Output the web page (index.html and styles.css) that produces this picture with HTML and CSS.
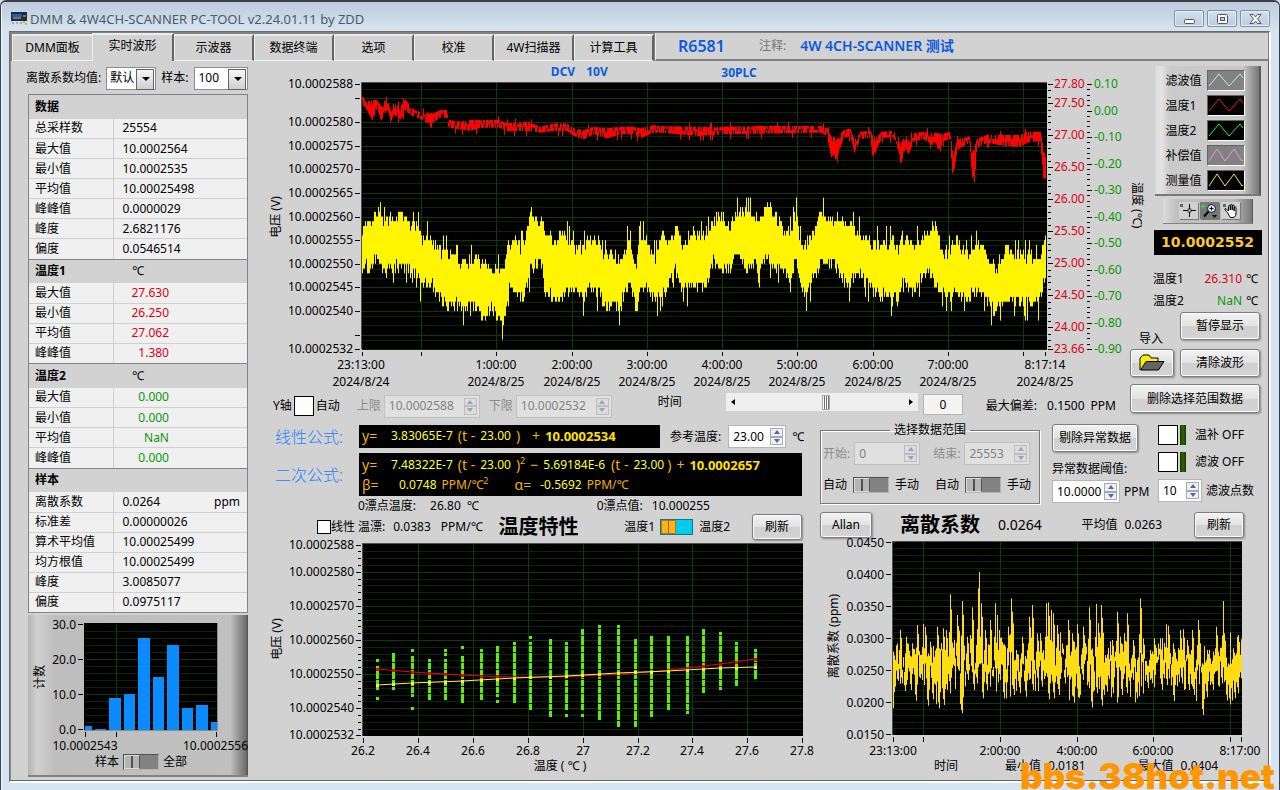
FILE: index.html
```html
<!DOCTYPE html>
<html lang="zh-CN">
<head>
<meta charset="utf-8">
<title>DMM &amp; 4W4CH-SCANNER PC-TOOL</title>
<link rel="stylesheet" href="styles.css">
</head>
<body>
<div class="window">
  <header class="titlebar">
    <svg class="app-icon" width="16" height="14" viewBox="0 0 16 14"><rect width="16" height="9" fill="#1c2c3c"/><rect x="1" y="2" width="10" height="3" fill="#2858c8"/><path d="M2 6h8M12 4h3" stroke="#e8c860"/><path d="M1 11h2M5 11h2M9 11h2" stroke="#b0a8a0" stroke-width="2"/><path d="M12 10h2M14 12h2" stroke="#e0b020" stroke-width="2"/></svg>
    <h1>DMM &amp; 4W4CH-SCANNER PC-TOOL v2.24.01.11 by ZDD</h1>
    <div class="win-buttons">
      <button aria-label="最小化"><svg width="14" height="12"><rect x="2.5" y="6.500" width="10" height="4" rx="1" fill="#fff" stroke="#4c5464"/></svg></button>
      <button aria-label="最大化"><svg width="14" height="12"><rect x="2.500" y="1.500" width="10" height="9" rx="1" fill="#fff" stroke="#4c5464"/><rect x="5.500" y="4.500" width="4" height="3" fill="#c4d2e2" stroke="#4c5464"/></svg></button>
      <button aria-label="关闭"><svg width="14" height="12"><path d="M2 1.500h3.500l2 2.500 2-2.500H13L9.500 6l3.500 4.500H9.500l-2-2.500-2 2.500H2L5.500 6z" fill="#fff" stroke="#4c5464"/></svg></button>
    </div>
  </header>

  <div class="client">
    <div class="tabbar">
      <nav class="tabs">
        <button>DMM面板</button><button class="active">实时波形</button><button>示波器</button><button>数据终端</button><button>选项</button><button>校准</button><button>4W扫描器</button><button>计算工具</button>
      </nav>
      <div class="device">
        <strong class="model">R6581</strong><span class="remark">注释:</span><strong>4W 4CH-SCANNER 测试</strong>
      </div>
    </div>

    <div class="page">
      <aside class="left">
        <div class="picks">
          <label for="avg">离散系数均值:</label>
          <span class="combo short"><select id="avg"><option>默认</option></select></span>
          <label for="smp">样本:</label>
          <span class="combo"><select id="smp"><option>100</option></select></span>
        </div>
        <div class="tables">
          <table>
            <colgroup><col class="name"><col><col class="u"></colgroup>
            <thead><tr><th colspan="3">数据</th></tr></thead>
            <tbody>
            <tr><th>总采样数</th><td colspan="2">25554</td></tr>
            <tr><th>最大值</th><td colspan="2">10.0002564</td></tr>
            <tr><th>最小值</th><td colspan="2">10.0002535</td></tr>
            <tr><th>平均值</th><td colspan="2">10.00025498</td></tr>
            <tr><th>峰峰值</th><td colspan="2">0.0000029</td></tr>
            <tr><th>峰度</th><td colspan="2">2.6821176</td></tr>
            <tr><th>偏度</th><td colspan="2">0.0546514</td></tr>
            </tbody>
          </table>
          <table class="temp red">
            <colgroup><col class="name"><col></colgroup>
            <thead><tr><th>温度1</th><td>℃</td></tr></thead>
            <tbody>
            <tr><th>最大值</th><td>27.630</td></tr>
            <tr><th>最小值</th><td>26.250</td></tr>
            <tr><th>平均值</th><td>27.062</td></tr>
            <tr><th>峰峰值</th><td>1.380</td></tr>
            </tbody>
          </table>
          <table class="temp green">
            <colgroup><col class="name"><col></colgroup>
            <thead><tr><th>温度2</th><td>℃</td></tr></thead>
            <tbody>
            <tr><th>最大值</th><td>0.000</td></tr>
            <tr><th>最小值</th><td>0.000</td></tr>
            <tr><th>平均值</th><td>NaN</td></tr>
            <tr><th>峰峰值</th><td>0.000</td></tr>
            </tbody>
          </table>
          <table>
            <colgroup><col class="name"><col><col class="u"></colgroup>
            <thead><tr><th colspan="3">样本</th></tr></thead>
            <tbody>
            <tr><th>离散系数</th><td>0.0264</td><td class="unit">ppm</td></tr>
            <tr><th>标准差</th><td colspan="2">0.00000026</td></tr>
            <tr><th>算术平均值</th><td colspan="2">10.00025499</td></tr>
            <tr><th>均方根值</th><td colspan="2">10.00025499</td></tr>
            <tr><th>峰度</th><td colspan="2">3.0085077</td></tr>
            <tr><th>偏度</th><td colspan="2">0.0975117</td></tr>
            </tbody>
          </table>
        </div>
        <div class="hist">
          <svg id="hist" viewBox="28 615 220 138"></svg>
          <div class="toggle-row"><span>样本</span><button class="toggle" role="switch" aria-checked="false" aria-label="样本或全部"><i></i></button><span>全部</span></div>
        </div>
      </aside>

      <main>
        <section class="top">
          <div class="plot-area">
            <svg id="wave" viewBox="262 64 866 328"></svg>
            <div class="axis-row">
              <label for="yauto">Y轴</label><input type="checkbox" id="yauto" class="box"><span class="auto">自动</span>
              <label for="hi" class="dim">上限</label>
              <span class="spin wide off"><input id="hi" value="10.0002588" disabled><span><button aria-label="加"></button><button aria-label="减"></button></span></span>
              <label for="lo" class="dim">下限</label>
              <span class="spin wide off"><input id="lo" value="10.0002532" disabled><span><button aria-label="加"></button><button aria-label="减"></button></span></span>
              <label for="pos" class="time">时间</label>
              <span class="scroll"><i class="prev"></i><input type="range" id="pos" min="0" max="100" value="53"><i class="next"></i></span>
              <input class="num" value="0" aria-label="时间位置">
              <span class="dev">最大偏差:</span><span>0.1500</span><span>PPM</span>
            </div>
          </div>
          <div class="side">
            <div class="side-top">
              <span class="vtitle">温度 (℃)</span>
              <div class="side-stack">
                <ul class="legend" id="legend"></ul>
                <div class="tools">
                  <button aria-label="光标"><svg width="19" height="17"><rect x="1" y="2" width="3" height="3" fill="#4a7a4a"/><path d="M10.500 2v13M4 8.500h13" stroke="#000"/><rect x="9" y="7" width="3" height="3" fill="#ccc" stroke="#000" stroke-width=".6"/></svg></button>
                  <button class="on" aria-label="缩放"><svg width="19" height="17"><path d="M3 2v5M.5 4.500h5" stroke="#38e038"/><circle cx="11.500" cy="6.500" r="4" fill="#e4e4f8" stroke="#101020"/><path d="M9.500 6.500h4M11.500 4.500v4" stroke="#000"/><path d="M8.500 9.500L4 14.500" stroke="#000" stroke-width="2"/><path d="M12 13h5l-2.500 3z"/></svg></button>
                  <button aria-label="平移"><svg width="19" height="17"><rect x="2" y="2" width="3" height="3" fill="#4a7a4a"/><path d="M6.500 10.500L4 8q-.5-1.500 1-1.500L7.500 9V4q.8-1.500 1.800 0v4-5q.9-1.500 1.900 0v5-4.500q.9-1.500 1.900 0V9 5.500q1-1.500 1.900 0V11q0 3-2 4.500H9.500q-1.500-2-3-5z" fill="#fff" stroke="#000"/></svg></button>
                </div>
                <output class="readout">10.0002552</output>
              </div>
            </div>
            <dl class="temps"><div><dt>温度1</dt><dd class="r">26.310</dd><dd>℃</dd></div><div><dt>温度2</dt><dd class="g">NaN</dd><dd>℃</dd></div></dl>
            <div class="actions">
              <div class="import"><span id="imp">导入</span><button class="btn flat" aria-labelledby="imp"><svg width="28" height="18" viewBox="0 0 28 18"><path d="M2 16V4l3-3h6l2 3h7v4" fill="#fff200" stroke="#000"/><path d="M2.500 16L8 7.500h18L20.500 16z" fill="#646464" stroke="#000"/></svg></button></div>
              <div class="pair"><button class="btn">暂停显示</button><button class="btn">清除波形</button></div>
              <button class="btn full">删除选择范围数据</button>
            </div>
          </div>
        </section>

        <section class="bottom">
          <div class="mid">
            <div class="formula-line">
              <span class="fname">线性公式:</span>
              <div class="formula one"><div><b>y=</b><i>3.83065E-7</i><b>(t -</b><i>23.00</i><b>)</b><b class="plus">+</b><strong>10.0002534</strong></div></div>
              <label for="ref">参考温度:</label>
              <span class="spin ref"><input id="ref" value="23.00"><span><button aria-label="加"></button><button aria-label="减"></button></span></span>
              <span>℃</span>
            </div>
            <div class="formula-line second">
              <span class="fname">二次公式:</span>
              <div class="formula two">
                <div><b>y=</b><i>7.48322E-7</i><b>(t -</b><i>23.00</i><b>)<sup>2</sup></b><b>−</b><i class="c2">5.69184E-6</i><b>(t -</b><i class="t2">23.00</i><b>)</b><b>+</b><strong>10.0002657</strong></div>
                <div class="coef"><b>β=</b><i>0.0748</i><em>PPM/℃<sup>2</sup></em><b class="alpha">α=</b><i class="av">-0.5692</i><em>PPM/℃</em></div>
              </div>
            </div>
            <div class="drift"><span>0漂点温度:</span><span class="dv">26.80</span><span>℃</span><span class="dz">0漂点值:</span><span>10.000255</span></div>
            <div class="char-row">
              <input type="checkbox" id="lin" class="box small"><label for="lin">线性</label><span class="td">温漂:</span><span class="tv">0.0383</span><span>PPM/℃</span>
              <h2>温度特性</h2>
              <span class="t1">温度1</span><button class="toggle cyan" role="switch" aria-checked="false" aria-label="温度1或温度2"><i></i></button><span>温度2</span>
              <button class="btn refresh">刷新</button>
            </div>
            <svg id="temp" viewBox="262 537 553 236"></svg>
          </div>

          <div class="right">
            <div class="settings">
              <fieldset>
                <legend>选择数据范围</legend>
                <div class="range-row">
                  <label for="st">开始:</label><span class="spin off"><input id="st" value="0" disabled><span><button aria-label="加"></button><button aria-label="减"></button></span></span>
                  <label for="en">结束:</label><span class="spin off"><input id="en" value="25553" disabled><span><button aria-label="加"></button><button aria-label="减"></button></span></span>
                </div>
                <div class="range-row modes">
                  <span>自动</span><button class="toggle" role="switch" aria-checked="false" aria-label="开始模式"><i></i></button><span>手动</span>
                  <span class="m2">自动</span><button class="toggle" role="switch" aria-checked="false" aria-label="结束模式"><i></i></button><span>手动</span>
                </div>
              </fieldset>
              <div class="outlier">
                <button class="btn">剔除异常数据</button>
                <label for="thr">异常数据阈值:</label>
                <div class="inline"><span class="spin thr"><input id="thr" value="10.0000"><span><button aria-label="加"></button><button aria-label="减"></button></span></span><span>PPM</span></div>
              </div>
              <div class="filters">
                <div class="led-row"><input type="checkbox" class="box" id="tc"><i class="led"></i><label for="tc">温补 OFF</label></div>
                <div class="led-row"><input type="checkbox" class="box" id="fl"><i class="led"></i><label for="fl">滤波 OFF</label></div>
                <div class="inline"><span class="spin pts"><input id="pts" value="10"><span><button aria-label="加"></button><button aria-label="减"></button></span></span><label for="pts">滤波点数</label></div>
              </div>
            </div>
            <div class="allan-row">
              <button class="btn">Allan</button><h2>离散系数</h2><span class="big">0.0264</span><span class="mean">平均值</span><span>0.0263</span><button class="btn refresh">刷新</button>
            </div>
            <svg id="disp" viewBox="815 539 447 219"></svg>
            <div class="stats"><span>时间</span><span>最小值</span><span>0.0181</span><span>最大值</span><span>0.0404</span></div>
          </div>
        </section>
      </main>
    </div>
  </div>
  <div class="watermark">bbs.38hot.net</div>
</div>
<script src="charts.js"></script>
</body>
</html>
```

FILE: styles.css
```css
* { box-sizing: border-box; }
body {
  margin: 0;
  background: #d6e4f1;
  color: #000;
  font: 12px/16px "Noto Sans", "Noto Sans CJK SC", sans-serif;
}
button, input, select { font: inherit; color: inherit; padding: 0; margin: 0; border-radius: 0; }
h1, h2, ul, dl, dd { margin: 0; padding: 0; }
h1 { font-size: 13px; font-weight: 400; color: #4e5a68; }
svg { display: block; }
main svg[id], aside svg { width: 100%; height: auto; overflow: visible; }

.window {
  position: relative;
  min-height: 100vh;
  display: flex;
  flex-direction: column;
  padding: 0 8px 8px;
  border: 1px solid #3c4046;
  border-top-width: 2px;
  border-radius: 6px 6px 0 0;
  background: #d6e4f1;
  box-shadow: inset 1px 1px 0 #f2f7fb;
  overflow: hidden;
}
.titlebar {
  display: flex;
  align-items: center;
  height: 29px;
  margin: 0 -7px;
  padding: 4px 8px 0 9px;
  background: linear-gradient(#bccbdb, #d8e5f1);
}
.app-icon { margin-right: 3px; }
.win-buttons { display: flex; gap: 3px; margin-left: auto; }
.win-buttons button {
  display: flex; align-items: center; justify-content: center;
  width: 30px; height: 17px;
  border: 1px solid #8391a5; border-radius: 2px;
  background: linear-gradient(#d3dfec, #bccddf);
  box-shadow: inset 0 0 0 1px #e4edf6;
}
.client {
  flex: 1;
  border: 1px solid #6c6c6c;
  border-right: 2px solid #fff;
  border-bottom: 2px solid #fff;
  background: #d2d2d2;
  box-shadow: inset -1px -1px 0 #646464, inset 1px 0 0 #8c8c8c;
}

/* tabs */
.tabbar { display: flex; height: 29px; padding: 1px 1px 0 2px; background: #828282; }
.tabs { display: flex; align-items: flex-end; }
.tabs button {
  width: 80px; height: 27px;
  border: 0; border-top: 2px solid #ececec; border-left: 1px solid #ececec; border-right: 2px solid #646464; border-bottom: 1px solid #f4f4f4;
  background: #d2d2d2;
}
.tabs .active { width: 82px; height: 28px; border-bottom: 0; padding-bottom: 5px; }
.tabs button:first-child { border-right: 0; }
.device {
  flex: 1; display: flex; align-items: center;
  margin-left: 1px; padding-left: 22px;
  border-bottom: 2px solid #828282; border-left: 1px solid #ececec;
  background: #d2d2d2; color: #0a5adc;
}
.device strong { font-weight: 600; font-size: 14px; }
.device .model { font-size: 16px; }
.remark { color: #787878; margin: 0 14px 0 34px; }

/* page */
.page {
  display: grid;
  grid-template-columns: 220px minmax(0, 1fr);
  gap: 14px;
  padding: 3px 7px 4px 18px;
}
.picks { display: flex; align-items: center; height: 28px; gap: 5px; white-space: nowrap; margin-left: -2px; }
.picks label { flex: none; }
.combo { position: relative; width: 55px; height: 23px; flex: 1; border: 1px solid #8c8c94; background: #fff; }
.combo.short { max-width: 50px; }
.combo:not(.short) { max-width: 55px; margin-left: 1px; }
.combo select { appearance: none; display: block; width: 100%; height: 21px; border: 0; padding-left: 3px; background: transparent; }
.combo::before {
  content: ""; position: absolute; right: 1px; top: 1px; width: 16px; height: 19px;
  border: 1px solid #646464; background: linear-gradient(#f6f6f6, #cfcfcf); pointer-events: none;
}
.combo::after {
  content: ""; position: absolute; right: 5px; top: 9px;
  border: 4px solid transparent; border-top-color: #000; border-bottom: 0; pointer-events: none;
}
.tables { margin-top: 2px; border: 1px solid #82828c; border-top: 0; }
table { width: 100%; border-collapse: collapse; border-top: 1px solid #82828c; table-layout: fixed; }
col.name { width: 84px; }
col.u { width: 40px; }
table tr { height: 20px; border-bottom: 1px solid #d0d0d0; background: #f0f0f0; }
table tr:last-child { border-bottom: 0; }
thead tr { height: 24px; background: #d2d2d2; }
th, td { padding: 0; text-align: left; line-height: 16px; }
th { padding-left: 6px; font-weight: 400; white-space: nowrap; }
thead th { font-weight: 700; }
tbody th { border-right: 1px solid #d0d0d0; }
td { padding-left: 9px; }
td.unit { text-align: right; padding: 0 7px 0 0; }
.temp tbody td { text-align: right; padding-right: 78px; }
.temp thead td { padding-left: 19px; }
.red tbody td, .r { color: #dc0014; }
.green tbody td, .g { color: #0a960a; }
.hist {
  margin-top: 2px; padding-bottom: 4px;
  border-bottom: 2px solid #828282;
  background: linear-gradient(90deg, #b4b4b4 0, #d0d0d0 4%, #bebebe 12%, #c0c0c0 92%, #6e6e6e 99%, #505050);
}
.toggle-row { display: flex; align-items: center; gap: 4px; margin-left: 67px; height: 18px; }
.toggle {
  width: 36px; height: 16px; flex: none;
  border: 1px solid #505050; border-right-color: #b4b4b4; border-bottom-color: #b4b4b4; background: #828282;
}
.toggle i { display: block; width: 16px; height: 14px; border: 1px solid #dcdcdc; background: linear-gradient(90deg, #b4b4b4 46%, #505050 46% 54%, #b4b4b4 54%); border-right-color: #505050; }
.toggle.cyan { width: 33px; background: #00ccf0; border-color: #107888; }
.toggle.cyan i { width: 15px; border-color: #b47800; background: linear-gradient(90deg, #ffb41e 50%, #a06400 50% 57%, #ffb41e 57%); }

/* upper area */
.top { display: grid; grid-template-columns: minmax(0, 1fr) 132px; gap: 2px; }
.axis-row { display: flex; align-items: center; height: 28px; padding-left: 11px; white-space: nowrap; }
.axis-row .time { margin: -8px 44px 0 46px; }
.axis-row .dim { color: #8c8c8c; margin: 0 3px 0 17px; }
.axis-row .wide + .dim { margin-left: 9px; }
.auto { margin-left: 2px; }
.box { appearance: none; width: 20px; height: 20px; flex: none; border: 1px solid #000; background: #fff; margin-left: 2px; }
.box.small { width: 14px; height: 14px; }
.spin { display: inline-flex; width: 66px; height: 23px; flex: none; padding: 2px; border: 1px solid #b4b4bc; background: #fff; }
.spin input { flex: 1; min-width: 0; border: 0; background: transparent; padding-left: 2px; }
.spin > span { display: flex; flex-direction: column; width: 13px; }
.spin button { flex: 1; border: 1px solid #a8a8b0; background: #f0f0f0; display: flex; align-items: center; justify-content: center; }
.spin button::after { content: ""; border: 3px solid transparent; border-top-width: 0; border-bottom: 4px solid #5064b4; }
.spin button:last-child::after { border-top: 4px solid #5064b4; border-bottom-width: 0; }
.spin.off { background: #e0e0e0; border-color: #c0c0c0; color: #828282; }
.spin.off button { background: #dcdcdc; border-color: #bebebe; }
.spin.off button::after { opacity: .5; }
.spin.wide { width: 96px; }
.scroll { display: flex; align-items: center; flex: 1; height: 18px; background: #eee; margin-top: -8px; padding: 0 5px; }
.scroll input { appearance: none; flex: 1; min-width: 0; height: 16px; margin: 0 10px; background: transparent; }
.scroll input::-webkit-slider-thumb { appearance: none; width: 8px; height: 15px; border: 1px solid #a8a8a8; background: repeating-linear-gradient(90deg, #fff 0 1px, #707070 1px 2px); }
.prev, .next { border: 3px solid transparent; border-right: 4px solid #000; border-left: 0; }
.next { border-left: 4px solid #000; border-right: 0; }
.num { width: 40px; height: 21px; border: 1px solid #b4b4b4; background: #f4f4f4; text-align: center; margin: -4px 23px 0 5px; }
.dev { margin-right: 10px; }
.dev + span { margin-right: 6px; }
.dev ~ span:last-child { margin-right: 12px; }

.side { padding-top: 2px; }
.side-top { display: flex; justify-content: space-between; align-items: flex-start; }
.vtitle { writing-mode: vertical-rl; text-orientation: sideways; width: 14px; line-height: 14px; padding-top: 116px; white-space: nowrap; }
.side-stack { width: 109px; display: flex; flex-direction: column; align-items: center; }
.legend {
  list-style: none; width: 106px; padding: 3px 14px 1px 11px;
  background: linear-gradient(90deg, #dcdcdc 0, #e4e4e4 6%, #cacaca 14%, #c8c8c8 84%, #787878);
  border-right: 2px solid #5a5a5a; border-bottom: 2px solid #787878;
}
.legend li { display: flex; justify-content: space-between; align-items: center; height: 24px; }
.legend li + li { margin-top: 1px; }
.legend li svg { border: 1px solid #646464; border-right-color: #fff; border-bottom-color: #fff; width: 38px; height: 21px; margin-bottom: 2px; }
.tools {
  display: flex; justify-content: center; gap: 2px; width: 90px; margin: 3px 0 6px; padding: 3px 2px 4px 6px;
  background: linear-gradient(90deg, #dcdcdc, #c0c0c0 15%, #b8b8b8 80%, #787878); border-right: 1px solid #5a5a5a; border-bottom: 1px solid #828282;
}
.tools button { width: 19px; height: 17px; border: 0; background: #d0d0d0; box-shadow: 1px 1px 0 #787878; }
.tools .on { background: #787878; }
.readout { display: block; width: 108px; height: 25px; background: #000; color: #ffc828; font: 700 14px/24px "DejaVu Sans", sans-serif; text-align: center; }
.temps { margin: 13px 0 0 23px; }
.temps div { display: flex; height: 22px; align-items: center; }
.temps dd.r, .temps dd.g { flex: 1; text-align: right; margin-right: 4px; }
.temps dd:last-child { margin-right: 4px; }
.temps dt { width: 34px; white-space: nowrap; }
.actions { display: grid; grid-template-columns: 44px minmax(0, 1fr); gap: 7px 6px; padding-right: 2px; }
.btn {
  height: 28px; padding: 0 6px; border: 1px solid #7e7e7e; border-radius: 3px; flex: none; white-space: nowrap;
  background: linear-gradient(#f2f2f2, #e2e2e2 50%, #d0d0d0 52%, #d4d4d4);
  box-shadow: inset 0 0 0 1px #fafafa, 1px 1px 2px #8c8c8c;
}
.pair { display: flex; flex-direction: column; gap: 9px; }
.import { display: flex; flex-direction: column; justify-content: flex-end; gap: 2px; }
.import span { margin-left: 9px; }
.import .btn { display: flex; align-items: center; justify-content: center; }
.full { grid-column: 1 / -1; height: 29px; }

/* lower area */
.bottom { display: grid; grid-template-columns: 553fr 447fr; }
.bottom > div { min-width: 0; }
.mid { padding-top: 5px; }
.formula-line { display: flex; align-items: center; height: 23px; white-space: nowrap; }
.formula-line.second { height: 43px; margin: 5px 0 0; }
.fname { width: 97px; padding-left: 13px; font-size: 16px; color: #1e82ff; font-weight: 300; flex: none; }
.formula { background: #000; padding-left: 3px; height: 100%; color: #f0b400; }
.formula.one { width: 301px; margin-right: 10px; }
.formula.two { width: 443px; padding-top: 1px; }
.formula > div { display: flex; align-items: center; height: 22px; }
.formula .coef { height: 18px; }
.formula b { font-weight: 400; font-size: 14px; margin-right: 5px; }
.formula b:first-child { width: 29px; margin: 0; }
.formula i { font-style: normal; color: #ffff28; margin-right: 5px; }
.formula .plus { margin: 0 5px 0 7px; }
.formula strong { color: #ffe100; font-size: 13px; }
.formula em { font-style: normal; }
.formula .c2 { margin-right: 6px; }
.formula .t2 { margin-right: 3px; }
.formula sup { font-size: 9px; line-height: 0; }
.coef b + i { padding-left: 8px; }
.coef b.alpha { margin: 0 1px 0 26px; }
.ref { width: 58px; margin: 0 6px 0 7px; }
.drift { display: flex; align-items: center; height: 20px; padding-left: 96px; }
.drift .dv { margin: 0 6px 0 14px; }
.drift .dz { margin: 0 9px 0 118px; }
.char-row { display: flex; align-items: center; height: 22px; padding: 0 13px 0 53px; white-space: nowrap; }
.char-row .td { margin: 0 8px 0 3px; }
.char-row .tv { margin-right: 10px; }
h2 { font-size: 20px; line-height: 22px; font-weight: 600; }
.char-row h2 { margin-left: 16px; }
.t1 { margin: 0 5px 0 auto; }
.char-row .toggle { margin-right: 6px; }
.char-row .refresh { margin-left: 22px; }
.refresh { width: 50px; height: 26px; }

.settings { display: flex; height: 90px; padding: 4px 0 0 5px; white-space: nowrap; }
fieldset { width: 220px; height: 80px; margin: 0; min-width: 0; padding: 0 2px; border: 1px solid #787878; box-shadow: 1px 1px 0 #fff, inset 1px 1px 0 #fff; }
legend { margin: 0 auto; padding: 0 4px; line-height: 12px; }
.range-row { display: flex; align-items: center; margin-top: 6px; }
.range-row label { color: #8c8c8c; margin-right: 4px; }
.range-row .spin + label { margin-left: 13px; }
.modes { margin-top: 12px; gap: 6px; }
.m2 { margin-left: 10px; }
.outlier { display: flex; flex-direction: column; align-items: flex-start; margin-left: 12px; width: 98px; }
.outlier > label { margin: 9px 0 3px; }
.inline { display: flex; align-items: center; gap: 4px; }
.thr { width: 68px; }
.filters { margin: -3px 0 0 8px; }
.filters .box { margin: 0; }
.led-row { display: flex; align-items: center; height: 27px; }
.led { width: 6px; height: 20px; margin: 0 9px 0 2px; background: linear-gradient(90deg, #143c00, #326400 50%, #143c00); }
.pts { width: 44px; }
.filters .inline { margin-top: 4px; }
.allan-row { display: flex; align-items: center; height: 29px; padding: 0 18px 0 5px; white-space: nowrap; }
.allan-row .btn { height: 26px; }
.allan-row > .btn:first-child { width: 52px; }
.allan-row h2 { margin: 0 18px 0 28px; }
.big { font-size: 14px; }
.mean { margin: 0 7px 0 auto; }
.allan-row .refresh { margin-left: 32px; }
.stats { display: flex; height: 16px; padding-left: 119px; }
.stats span:nth-child(2) { margin: 0 7px 0 47px; }
.stats span:nth-child(4) { margin: 0 7px 0 52px; }

.watermark {
  position: absolute; right: 4px; bottom: 0;
  font: 900 35px/30px Inter, sans-serif; color: #ff9600;
}

/* charts */
text { font-size: 12px; fill: #000; }
.blue { fill: #0a5adc; font-weight: 700; }
.tr { fill: #dc0014; }
.tg { fill: #0a960a; }
```

FILE: charts.js
```js
let seed = 7;
const rnd = () => (seed = (seed * 16807) % 2147483647) / 2147483647;
const rect = (x, y, w, h, f) => `<rect x="${x}" y="${y}" width="${w}" height="${h}" fill="${f}"/>`;
const hl = (x1, x2, y, c) => rect(x1, Math.round(y), x2 - x1, 1, c);
const vl = (x, y1, y2, c) => rect(Math.round(x), y1, 1, y2 - y1, c);
const text = (x, y, s, a = 'middle', c = '') => `<text x="${x}" y="${y}" text-anchor="${a}" class="${c}">${s}</text>`;
const vtext = (x, y, s) => `<text transform="translate(${x} ${y}) rotate(-90)" text-anchor="middle">${s}</text>`;
const put = (id, s) => { document.getElementById(id).innerHTML = s; };
const MAJ = '#0a3c0a', MIN = '#082608';

function at(pts, x, k) {
  let i = 1;
  while (i < pts.length - 1 && pts[i][0] < x) i++;
  const a = pts[i - 1], b = pts[i];
  const t = Math.max(0, Math.min(1, (x - a[0]) / (b[0] - a[0])));
  return a[k] + (b[k] - a[k]) * t;
}
const parse = (s, ox, oy) => s.split(' ').map(p => {
  const v = p.split(',').map(Number);
  return [ox + v[0] / 3, ...v.slice(1).map(y => oy + y / 3)];
});

/* waveform */
const band = [
  ...parse('306,495,635 330,490,640 350,450,600 370,475,650 400,460,640 430,460,630 455,495,660 470,480,650 485,525,700 510,530,680 530,560,720 560,570,760 590,590,750 620,600,770 640,585,745 665,600,785 700,610,760 720,620,800 730,630,810 745,540,700 765,520,700 785,560,740 800,500,690 812,440,640 825,470,630 845,470,620 860,520,710 885,530,740 910,500,730 930,540,700 950,550,700 970,560,740 985,515,690 1000,530,710 1020,540,720 1035,580,760 1060,570,750 1080,590,760 1095,560,700 1110,510,670 1120,600,740 1130,600,780 1140,515,700 1165,540,700 1185,590,740 1205,510,710 1220,550,700 1245,500,640', 260, 60),
  ...parse('50,500,670 70,555,720 90,500,680 125,520,700 145,500,670 160,470,620 180,450,640 210,490,640 235,440,600 260,450,640 280,460,620 300,470,650 318,425,600 340,450,630 370,500,650 390,510,690 407,440,590 420,540,690 435,550,720 450,520,690 480,450,620 510,470,620 530,465,640 560,480,690 600,515,660 640,540,710 670,540,720 700,535,730 715,560,730 725,520,690 760,550,710 800,500,640 825,480,680 845,580,710 865,560,720 890,530,710 915,580,720 940,550,720 965,545,710 990,600,760 1010,610,760 1035,550,730 1060,580,740 1090,580,740 1110,580,750 1135,600,750 1150,530,680 1157,510,680', 660, 60)
];
const red = [
  ...parse('306,105,130 315,125,140 337,120,180 350,120,140 362,140,180 378,110,150 390,150,185 400,130,160 420,140,175 435,118,150 455,145,165 480,155,175 500,160,185 520,160,185 540,150,170 558,150,170 565,180,200 600,185,205 630,180,210 660,180,200 715,180,200 740,190,210 800,185,210 840,200,215 880,190,210 920,190,210 940,205,225 970,210,235 1000,200,220 1040,205,232 1080,200,220 1120,200,220 1140,205,232 1180,195,215', 260, 60),
  ...parse('0,198,215 115,200,225 185,200,220 300,198,218 480,198,215 500,205,225 512,230,290 520,230,280 530,240,310 540,220,260 550,210,230 570,205,225 582,240,275 600,215,235 630,212,230 638,230,300 650,230,260 665,215,230 700,212,230 710,240,270 722,250,310 735,225,260 745,240,280 760,220,240 790,215,235 835,220,265 850,220,240 870,215,235 878,290,350 890,240,270 900,235,260 928,230,245 935,280,350 942,260,365 950,235,260 980,225,245 1030,225,255 1080,225,258 1100,215,245 1140,215,240 1148,260,350 1157,300,355', 660, 60)
];
(function wave() {
  const U = 265 / 56;
  const y = v => 84 + (2588 - v) * U;
  let s = rect(361, 82, 686, 267, '#505050') + rect(362, 83, 685, 266, '#000');
  for (let v = 2585; v >= 2535; v -= 5) {
    s += hl(362, 1047, y(v), MAJ) + hl(362, 1047, y(v - 1), MIN) + hl(362, 1047, y(v - 3), MIN);
  }
  s += hl(362, 1047, y(2587), MIN);
  const xs = [421, 496, 572, 647, 722, 797, 873, 948, 1023];
  xs.forEach(x => { s += vl(x, 83, 349, MAJ) + vl(x, 352, 356, '#000'); });
  s += vl(362, 352, 356, '#000') + vl(1045, 352, 356, '#000');
  let d = '', r = '';
  const q = v => 84 + Math.round((v - 84) / U) * U;
  for (let x = 362; x < 1046; x++) {
    const k = rnd(), m = rnd();
    const t = q(at(band, x, 1) + 10 - 14 * k - (k > 0.93 ? 9 : 0));
    const b = q(at(band, x, 2) - 12 + 15 * m + (m > 0.93 ? 9 : 0));
    d += `M${x + 0.5} ${t.toFixed(1)}V${b.toFixed(1)}`;
    const c = rnd(), e = rnd();
    const t2 = at(red, x, 1) - (c > 0.96 ? 4 : 0) + (c < 0.3 ? 4 : 0);
    const b2 = at(red, x, 2) + 1 + (e > 0.94 ? 5 : 0) - (e < 0.25 ? 4 : 0);
    r += `M${x + 0.5} ${Math.min(t2, b2 - 3).toFixed(1)}V${b2.toFixed(1)}`;
  }
  s += `<path d="${r}" stroke="#f00" stroke-width="1"/><path d="${d}" stroke="#fff500"/>`;
  [2588, 2580, 2575, 2570, 2565, 2560, 2555, 2550, 2545, 2540, 2532].forEach(v => {
    s += text(353, Math.round(y(v)) + 4, '10.000' + v, 'end') + hl(355, 360, y(v), '#000');
  });
  s += hl(355, 360, y(2585), '#000') + hl(355, 360, y(2535), '#000');
  const ty = v => 84 + (27.8 - v) * 64;
  ['27.80', '27.50', '27.00', '26.50', '26.00', '25.50', '25.00', '24.50', '24.00', '23.66'].forEach(v => {
    s += text(1054, Math.round(ty(+v)) + 4, v, 'start', 'tr') + hl(1048, 1053, ty(+v), '#000');
  });
  for (let v = 27.7; v > 23.68; v -= 0.1) s += hl(1048, 1051, ty(v), '#000');
  for (let i = 0; i <= 10; i++) {
    const v = (0.1 - i / 10).toFixed(2), yy = 84 + i * 26.5;
    s += text(1094, Math.round(yy) + 4, v, 'start', 'tg') + hl(1087, 1092, yy, '#000');
    if (i < 10) for (let j = 1; j < 5; j++) s += hl(1087, 1090, yy + j * 5.3, '#000');
  }
  [['23:13:00', 361], ['1:00:00', 496], ['2:00:00', 572], ['3:00:00', 647], ['4:00:00', 722], ['5:00:00', 797], ['6:00:00', 873], ['7:00:00', 948], ['8:17:14', 1045]].forEach(([t, x], i) => {
    s += text(x, 369, t) + text(x, 386, i ? '2024/8/25' : '2024/8/24');
  });
  s += vtext(280, 217, '电压 (V)') + text(563, 76, 'DCV', 'middle', 'blue') + text(597, 76, '10V', 'middle', 'blue') + text(739, 77, '30PLC', 'middle', 'blue');
  put('wave', s);
})();

/* temperature characteristic */
(function temp() {
  const y = v => 543.5 + (2588 - v) * 3.41;
  let s = rect(362, 542, 441, 193, '#505050') + rect(363, 543, 440, 192, '#000');
  for (let v = 2586; v > 2532; v -= 2) {
    s += hl(363, 803, y(v), v % 10 ? MIN : MAJ) + hl(358, 361, y(v), '#000');
  }
  for (let i = 0; i < 9; i++) {
    const x = 363 + i * 54.9;
    if (i && i < 8) s += vl(x, 543, 735, MAJ);
    s += vl(x, 737, 742, '#000') + text(Math.round(x), 754, i === 4 ? '27' : (26.2 + i * 0.2).toFixed(1));
  }
  [2588, 2580, 2570, 2560, 2550, 2540, 2532].forEach(v => {
    s += text(354, Math.round(y(v)) + 4, '10.000' + v, 'end') + hl(356, 361, y(v), '#000');
  });
  const cols = '377:54,52-46,43 393:56-46 412:57,55-44,40 429:54-43 445:57-56,54-43 462:58,55-42 481:57-43 497:58-44,42 514:59-42 530:61,59-40 550:60-38 566:59-40,38 582:63-40,38 599:64-37 618:64-36,35 635:60-35 651:61-38 668:61-40 687:61-39 703:63-45 720:62-46 736:59-47 755:57-49';
  cols.split(' ').forEach(c => {
    const [x, parts] = c.split(':');
    parts.split(',').forEach(p => {
      const [a, b = a] = p.split('-').map(Number);
      for (let v = a; v >= b; v--) s += rect(x - 1, Math.round(y(2500 + v)) - 1, 3, 3, '#5af000');
    });
  });
  const curve = (p, c) => {
    s += `<polyline points="${p}" fill="none" stroke="${c}"/>`;
    cols.split(' ').forEach(k => {
      const x = +k.split(':')[0], pts = p.split(' ').map(q => q.split(',').map(Number));
      s += rect(x - 1, Math.round(at(pts, x, 1)) - 1, 3, 3, c);
    });
  };
  curve('377,668 412,671 445,673 481,675 514,676 550,676 582,675 618,673 651,671 687,667 720,663 755,658', '#f00014');
  curve('377,684 412,682 462,680 514,677 566,675 618,672 668,670 720,667 755,666', '#fff03c');
  s += vtext(281, 638, '电压 (V)') + text(560, 769, '温度 ( ℃ )');
  put('temp', s);
})();

/* dispersion */
(function disp() {
  let s = rect(892, 541, 350, 194, '#505050') + rect(893, 542, 349, 193, '#000');
  for (let i = 1; i < 30; i++) s += hl(893, 1242, 542 + i * 6.42, i % 5 ? MIN : MAJ);
  for (let i = 0; i < 7; i++) {
    const y = 542 + i * 32;
    s += text(884, y + 5, '0.0' + (450 - i * 50), 'end') + hl(886, 891, y, '#000');
  }
  [923, 1000, 1077, 1153, 1230].forEach(x => { s += vl(x, 542, 735, MAJ) + vl(x, 737, 742, '#000'); });
  s += vl(893, 737, 742, '#000') + vl(1241, 737, 742, '#000');
  [['23:13:00', 893], ['2:00:00', 1000], ['4:00:00', 1077], ['6:00:00', 1153], ['8:17:00', 1240]].forEach(([t, x]) => { s += text(x, 755, t); });
  const hi = '250,365 270,300 287,320 305,340 322,285 338,282 345,290 360,335 380,290 398,295 408,300 420,193 440,255 457,213 470,320 487,232 503,175 508,126 513,220 525,300 541,270 556,220 562,255 567,300 595,290 602,205 606,245 618,360 637,320 656,260 667,225 680,310 690,310 707,220 713,217 722,240 728,250 740,285 757,340 775,270 785,310 800,283 820,290 837,232 859,222 864,280 874,225 885,375 905,330 920,245 930,320 941,310 952,250 970,330 989,205 992,235 1000,325 1020,360 1031,325 1045,340 1068,283 1074,287 1090,340 1111,300 1120,298 1130,330 1147,300 1163,270 1175,400 1190,360 1210,365 1219,290 1238,213 1241,220 1243,310 1255,400 1268,355 1280,320 1285,315 1292,328';
  const lo = '250,535 256,470 275,460 302,480 317,512 335,450 355,527 368,508 386,535 402,525 412,480 452,540 455,550 475,450 492,480 500,460 520,505 532,480 550,440 570,450 582,505 588,505 612,495 630,490 648,500 670,480 697,470 717,508 733,505 748,495 765,460 793,518 820,450 845,533 860,490 877,527 890,485 910,490 935,495 950,490 980,505 1013,475 1055,480 1072,465 1093,513 1115,460 1137,480 1153,495 1180,555 1192,502 1210,480 1235,460 1252,512 1261,523 1275,505 1285,490 1294,445';
  const top = {}, bot = {};
  parse(hi, 810, 530).forEach(([x, y]) => { top[Math.round(x)] = y; });
  parse(lo, 810, 530).forEach(([x, y]) => { bot[Math.round(x)] = y; });
  let d = '';
  for (let x = 893; x < 1242; x++) {
    let t = 642 + rnd() * 32, b = t + 6 + rnd() * 26;
    if (rnd() > 0.75) t -= 12;
    if (top[x - 1]) t = top[x - 1] + (670 - top[x - 1]) * 0.2;
    if (top[x + 1]) t = top[x + 1] + (670 - top[x + 1]) * 0.5;
    if (bot[x + 1]) b = bot[x + 1] - 6;
    if (bot[x - 1]) b = bot[x - 1] - 16;
    if (top[x]) t = top[x];
    if (bot[x]) b = bot[x];
    d += `M${x + 0.5} ${t.toFixed(1)}V${Math.max(b, t + 6).toFixed(1)}`;
  }
  s += `<path d="${d}" stroke="#ffdc14"/>` + vtext(838, 636, '离散系数 (ppm)');
  put('disp', s);
})();

/* histogram */
(function hist() {
  let s = rect(84, 623, 134, 108, '#8c8c8c') + rect(84, 623, 133, 107, '#000');
  for (let i = 1; i < 15; i++) s += hl(85, 217, 624 + i * 7, i % 5 ? MIN : MAJ);
  s += vl(116, 624, 730, MAJ);
  [[85, 7, 726], [95, 11, 729], [109, 12, 698], [124, 11, 694], [138, 12, 638], [153, 11, 677], [167, 12, 645], [182, 11, 708], [196, 12, 705], [211, 6, 722]].forEach(([x, w, y]) => { s += rect(x, y, w, 730 - y, '#0a8cff'); });
  ['30.0', '20.0', '10.0', '0.0'].forEach((t, i) => { s += text(76, 629 + i * 35, t, 'end') + hl(78, 83, 624 + i * 35, '#000'); });
  [85, 116, 216].forEach(x => { s += vl(x, 732, 737, '#000'); });
  s += text(85, 750, '10.0002543') + text(183, 750, '10.0002556', 'start') + vtext(44, 677, '计数');
  put('hist', s);
})();

/* legend swatches */
put('legend', [['滤波值', '#828282', '#b4f0f0'], ['温度1', '#000', '#ff1414'], ['温度2', '#000', '#14ff14'], ['补偿值', '#828282', '#f096dc'], ['测量值', '#000', '#fff014']].map(([n, b, c], i) =>
  `<li>${n}<svg viewBox="0 0 36 19"><rect width="36" height="19" fill="${b}"/><polyline points="${i < 3 ? '1,15 11,3 21,15 32,3 35,7' : '1,15 9,3 17,15 26,3 34,15 35,14'}" fill="none" stroke="${c}"/></svg></li>`).join(''));
```
